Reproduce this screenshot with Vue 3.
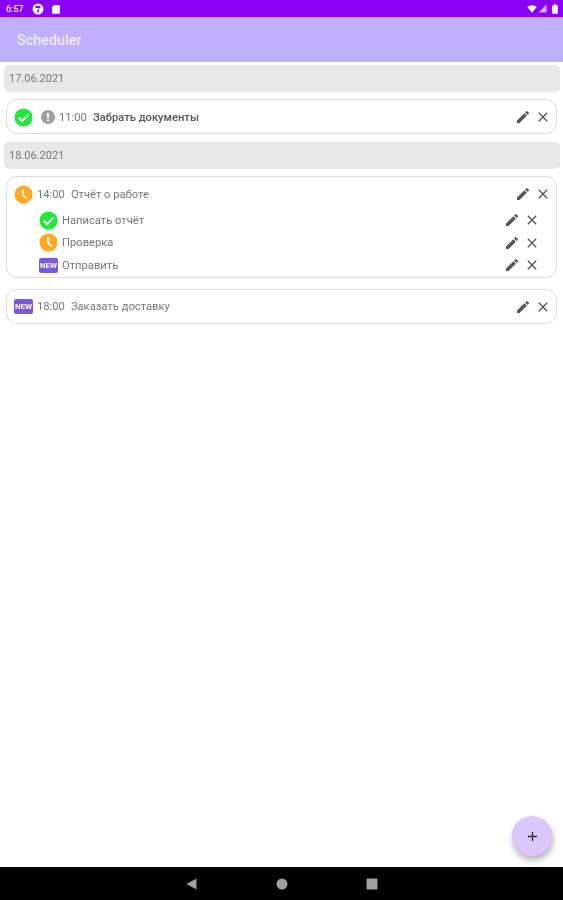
<template>
  <div class="screen">
    <div class="status-bar">
      <span class="clock">6:57</span>
      <svg class="status-icon" viewBox="0 0 12 12" width="12" height="12">
        <circle cx="6" cy="6" r="5.5" fill="#fff" />
        <path d="M3.500 3h5.500L6.800 6.500V9.500H5.200V7.500L7 5H3.500z" fill="#8a00f5" />
      </svg>
      <svg class="status-icon" viewBox="0 0 10 12" width="8" height="10">
        <path d="M2.5 1H9a.8.8 0 0 1 .8.8v9.4a.8.8 0 0 1-.8.8H1a.8.8 0 0 1-.8-.8V3.5z" fill="#fff" />
      </svg>
      <span class="spacer"></span>
      <svg class="wifi" viewBox="0 0 12 10" width="10" height="8">
        <path d="M0 2.2Q6-1.6 12 2.2L6 9.6z" fill="#fff" />
      </svg>
      <svg class="signal" viewBox="0 0 10 10" width="9" height="9">
        <path d="M9.5 0.5V9.5H0.5z" fill="#fff" opacity="0.65" />
      </svg>
      <svg viewBox="0 0 7 11" width="6" height="10">
        <path d="M2 0h3v1h1.2a.6.6 0 0 1 .6.6v8.8a.6.6 0 0 1-.6.6H.8a.6.6 0 0 1-.6-.6V1.600a.6.6 0 0 1 .6-.6H2z" fill="#fff" />
      </svg>
    </div>

    <header class="app-bar">Scheduler</header>

    <main class="list">
      <template v-for="group in groups" :key="group.date">
        <div class="date">{{ group.date }}</div>
        <section v-for="task in group.tasks" :key="task.title" class="card">
          <div class="row">
            <svg v-if="task.state === 'done'" class="state" viewBox="0 0 20 20">
              <circle cx="10" cy="10" r="9.500" fill="#22e83a" />
              <path d="M5 10.300l3.500 3.500L15 7" fill="none" stroke="#fff" stroke-width="2.200" />
            </svg>
            <svg v-else-if="task.state === 'wait'" class="state" viewBox="0 0 20 20">
              <circle cx="10" cy="10" r="9.500" fill="#ffa726" />
              <path d="M9.500 4.500V10.500L13.500 14" fill="none" stroke="#fff" stroke-width="1.800" />
            </svg>
            <span v-else class="state new">NEW</span>
            <svg v-if="task.alert" class="alert" viewBox="0 0 14 14">
              <circle cx="7" cy="7" r="7" fill="#9e9e9e" />
              <path d="M6 3h2v5H6zM6 9.200h2v2H6z" fill="#fff" />
            </svg>
            <span class="time">{{ task.time }}</span>
            <span class="title" :class="{ strong: task.alert }">{{ task.title }}</span>
            <svg class="action" viewBox="0 0 24 24">
              <path d="M3 17.250V21h3.750L17.810 9.940l-3.750-3.750L3 17.250zM20.710 7.040a1 1 0 0 0 0-1.410l-2.340-2.340a1 1 0 0 0-1.410 0l-1.830 1.830 3.750 3.750 1.830-1.830z" fill="#555" />
            </svg>
            <svg class="action" viewBox="0 0 24 24">
              <path d="M19 6.410L17.590 5 12 10.590 6.410 5 5 6.410 10.590 12 5 17.590 6.410 19 12 13.410 17.590 19 19 17.590 13.410 12z" fill="#555" />
            </svg>
          </div>
          <div v-for="sub in task.subtasks" :key="sub.title" class="row sub">
            <svg v-if="sub.state === 'done'" class="state" viewBox="0 0 20 20">
              <circle cx="10" cy="10" r="9.500" fill="#22e83a" />
              <path d="M5 10.300l3.500 3.500L15 7" fill="none" stroke="#fff" stroke-width="2.200" />
            </svg>
            <svg v-else-if="sub.state === 'wait'" class="state" viewBox="0 0 20 20">
              <circle cx="10" cy="10" r="9.500" fill="#ffa726" />
              <path d="M9.500 4.500V10.500L13.500 14" fill="none" stroke="#fff" stroke-width="1.800" />
            </svg>
            <span v-else class="state new">NEW</span>
            <span class="title">{{ sub.title }}</span>
            <svg class="action" viewBox="0 0 24 24">
              <path d="M3 17.250V21h3.750L17.810 9.940l-3.750-3.750L3 17.250zM20.710 7.040a1 1 0 0 0 0-1.410l-2.340-2.340a1 1 0 0 0-1.410 0l-1.830 1.830 3.750 3.750 1.830-1.830z" fill="#555" />
            </svg>
            <svg class="action" viewBox="0 0 24 24">
              <path d="M19 6.410L17.590 5 12 10.590 6.410 5 5 6.410 10.590 12 5 17.590 6.410 19 12 13.410 17.590 19 19 17.590 13.410 12z" fill="#555" />
            </svg>
          </div>
        </section>
      </template>
    </main>

    <button class="fab">
      <svg viewBox="0 0 12 12" width="11" height="11">
        <path d="M5.300 1h1.400v4.300H11v1.400H6.700V11H5.300V6.700H1V5.300h4.300z" fill="#2c2433" />
      </svg>
    </button>

    <nav class="nav-bar">
      <svg viewBox="0 0 12 14" width="12" height="14"><path d="M10.500 1.500V12.500L0.500 7z" fill="#a0a0a0" /></svg>
      <svg viewBox="0 0 12 12" width="12" height="12"><circle cx="6" cy="6" r="5.500" fill="#a0a0a0" /></svg>
      <svg viewBox="0 0 12 12" width="12" height="12"><rect x="0.500" y="0.500" width="11" height="11" rx="1" fill="#a0a0a0" /></svg>
    </nav>
  </div>
</template>

<script setup>
const groups = [
  {
    date: "17.06.2021",
    tasks: [{ state: "done", alert: true, time: "11:00", title: "Забрать документы" }],
  },
  {
    date: "18.06.2021",
    tasks: [
      {
        state: "wait",
        time: "14:00",
        title: "Отчёт о работе",
        subtasks: [
          { state: "done", title: "Написать отчёт" },
          { state: "wait", title: "Проверка" },
          { state: "new", title: "Отправить" },
        ],
      },
      { state: "new", time: "18:00", title: "Заказать доставку" },
    ],
  },
];
</script>

<style>
html,
body {
  margin: 0;
  background: #fff;
}
</style>

<style scoped>
.screen {
  position: relative;
  width: 563px;
  height: 900px;
  display: flex;
  flex-direction: column;
  overflow: hidden;
  background: #fff;
  font-family: Roboto, "Noto Sans", sans-serif;
  color: #777;
  filter: blur(0.6px);
}
.status-bar {
  height: 17px;
  flex: none;
  display: flex;
  align-items: center;
  gap: 4px;
  padding: 0 5px 0 6px;
  background: #8a00f5;
  color: #fff;
}
.clock {
  font-size: 9px;
  font-weight: 500;
  margin-right: 4px;
}
.status-icon {
  margin-right: 4px;
}
.spacer {
  flex: 1;
}
.wifi {
  margin-right: -3px;
}
.signal {
  margin-right: 1px;
}
.app-bar {
  height: 44px;
  flex: none;
  display: flex;
  align-items: center;
  padding: 1px 0 0 17px;
  background: #bfb0ff;
  color: #f1edff;
  font-size: 14.400px;
  font-weight: 500;
}
.list {
  flex: 1;
  display: flex;
  flex-direction: column;
  padding: 3px 3px 0 4px;
}
.date {
  height: 27px;
  display: flex;
  align-items: center;
  padding-left: 5px;
  margin-bottom: 7px;
  border-radius: 5px;
  background: #e8e8e8;
  font-size: 11px;
  color: #777;
}
.card {
  margin: 0 3px 8px 2px;
  padding: 4px 5px 3px 7px;
  border: 1px solid #dcdcdc;
  border-radius: 11px;
}
.card + .card {
  margin-top: 3px;
}
.row {
  height: 26px;
  display: flex;
  align-items: center;
  font-size: 11.200px;
}
.row.sub {
  height: 22.500px;
  margin-left: 25px;
  padding-right: 11px;
}
.row:first-child + .sub {
  margin-top: 2px;
}
.row.sub:last-child {
  margin-bottom: -3px;
}
.state {
  flex: none;
  width: 19px;
  height: 19px;
  margin-right: 4px;
}
.new {
  height: 15px;
  border-radius: 2px;
  background: #7e57e0;
  color: #fff;
  font-size: 8px;
  font-weight: 700;
  line-height: 15px;
  text-align: center;
}
.alert {
  flex: none;
  width: 14px;
  height: 14px;
  margin: 0 4px 0 4px;
}
.time {
  margin-right: 6px;
}
.title {
  flex: 1;
}
.title.strong {
  color: #555;
  font-weight: 500;
}
.action {
  flex: none;
  width: 16px;
  height: 16px;
  margin-left: 4px;
}
.fab {
  position: absolute;
  left: 512px;
  top: 816px;
  width: 40px;
  height: 40px;
  display: flex;
  align-items: center;
  justify-content: center;
  padding: 0;
  border: none;
  border-radius: 50%;
  background: #dcc6fb;
  box-shadow: 1px 4px 6px rgba(0, 0, 0, 0.3);
}
.nav-bar {
  height: 33px;
  flex: none;
  display: flex;
  align-items: center;
  justify-content: center;
  gap: 78px;
  background: #000;
}
</style>
